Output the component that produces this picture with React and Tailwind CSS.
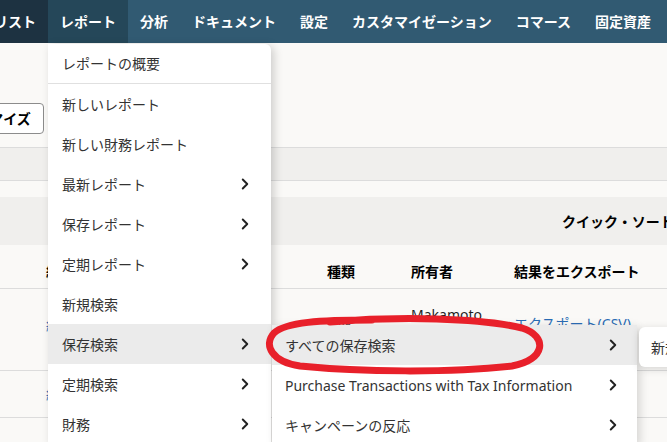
import React from 'react';
import { ChevronRight } from 'lucide-react';

const font = { fontFamily: '"Noto Sans", "Noto Sans CJK JP", sans-serif' };

const navItems = ['分析', 'ドキュメント', '設定', 'カスタマイゼーション', 'コマース', '固定資産'];

const reportMenu = [
  { label: '新しいレポート' },
  { label: '新しい財務レポート' },
  { label: '最新レポート', sub: true },
  { label: '保存レポート', sub: true },
  { label: '定期レポート', sub: true },
  { label: '新規検索' },
  { label: '保存検索', sub: true, active: true },
  { label: '定期検索', sub: true },
  { label: '財務', sub: true },
];

const savedSearchMenu = [
  { label: 'すべての保存検索', active: true },
  { label: 'Purchase Transactions with Tax Information' },
  { label: 'キャンペーンの反応' },
];

const MenuItem = ({ item }) => (
  <div
    className={`flex h-[40px] items-center justify-between pl-[14px] pr-[17px] text-[14px] text-[#333] whitespace-nowrap ${
      item.active ? 'bg-[#ebebeb]' : ''
    }`}
  >
    <span>{item.label}</span>
    {item.sub && <ChevronRight size={18} strokeWidth={2.6} className="text-[#222]" />}
  </div>
);

const App = () => {
  return (
    <div className="relative w-[667px] h-[442px] overflow-hidden bg-[#faf9f7] text-[#1f1f1f]" style={font}>
      {/* top nav */}
      <div className="flex h-[43px] bg-[#315a72] text-white text-[14px] font-bold whitespace-nowrap">
        <div className="flex items-center bg-[#1d3241] pr-3 ml-[-6px]">リスト</div>
        <div className="flex items-center bg-[#254759] px-3">レポート</div>
        {navItems.map((n) => (
          <div key={n} className="flex items-center px-3">{n}</div>
        ))}
      </div>

      {/* page content */}
      <div className="h-[60px]" />
      <div className="flex h-[31px]">
        <button className="ml-[-66px] h-[31px] w-[110px] rounded-[4px] border border-[#8c8c8c] bg-white text-[14px] font-bold text-black whitespace-nowrap">
          カスタマイズ
        </button>
      </div>
      <div className="h-[13px]" />
      <div className="h-[34px] border-y border-[#dcdcdc] bg-[#f0efed]" />
      <div className="h-[16px]" />
      <div className="flex h-[48px] items-center bg-[#f0efed] pl-[562px] text-[14px] font-bold text-black whitespace-nowrap">
        クイック・ソート
      </div>
      <div className="flex h-[44px] items-end border-b border-[#dcdcdc] pb-[6px] text-[14px] font-bold text-black whitespace-nowrap">
        <div className="w-[327px] pl-[46px]">編集</div>
        <div className="w-[84px]">種類</div>
        <div className="w-[103px]">所有者</div>
        <div>結果をエクスポート</div>
      </div>
      <div className="flex h-[82px] items-start border-b border-[#dcdcdc] text-[14px] leading-[20px] whitespace-nowrap">
        <div className="w-[327px] pl-[46px] pt-[27px] text-[#2a6cb5]">編集</div>
        <div className="w-[84px] pt-[26px]">顧客</div>
        <div className="flex w-[103px] flex-col pt-[16px]">
          <span>Makamoto</span>
          <span>Taro</span>
        </div>
        <div className="pt-[25px] text-[#2a6cb5]">エクスポート(CSV)</div>
      </div>
      <div className="flex h-[47px] items-center border-b border-[#dcdcdc] text-[14px] whitespace-nowrap">
        <div className="w-[327px] pl-[46px] text-[#2a6cb5]">編集</div>
      </div>

      {/* report dropdown */}
      <div className="absolute left-[48px] top-[44px] w-[223px] rounded-tr-[6px] bg-white shadow-[3px_2px_10px_rgba(0,0,0,0.18)]">
        <div className="flex h-[40px] items-center border-b border-[#e0e0e0] pl-[14px] text-[14px] text-[#333]">
          レポートの概要
        </div>
        {reportMenu.map((item) => (
          <MenuItem key={item.label} item={item} />
        ))}
      </div>

      {/* saved search submenu */}
      <div className="absolute left-[272px] top-[325px] w-[365px] rounded-tr-[6px] bg-white shadow-[3px_2px_10px_rgba(0,0,0,0.15)]">
        {savedSearchMenu.map((item) => (
          <div
            key={item.label}
            className={`flex h-[40px] items-center justify-between pl-[13px] pr-[15px] text-[14px] text-[#333] whitespace-nowrap ${
              item.active ? 'bg-[#ebebeb]' : ''
            }`}
          >
            <span>{item.label}</span>
            <ChevronRight size={18} strokeWidth={2.6} className="text-[#222]" />
          </div>
        ))}
      </div>

      {/* third level */}
      <div className="absolute left-[639px] top-[327px] flex h-[40px] w-[120px] items-center rounded-l-[6px] bg-white pl-[12px] text-[14px] text-[#333] whitespace-nowrap shadow-[0_2px_8px_rgba(0,0,0,0.15)]">
        新規保存検索
      </div>

      {/* hand-drawn highlight */}
      <svg className="pointer-events-none absolute left-0 top-0" width="667" height="442">
        <path
          d="M 330 322 C 400 316, 480 318, 522 328 C 548 336, 546 360, 512 366 C 450 373, 360 372, 300 366 C 272 362, 263 345, 274 333 C 286 322, 320 320, 372 320"
          fill="none"
          stroke="#e8202a"
          strokeWidth="7"
          strokeLinecap="round"
          strokeLinejoin="round"
        />
      </svg>
    </div>
  );
};

export default App;
